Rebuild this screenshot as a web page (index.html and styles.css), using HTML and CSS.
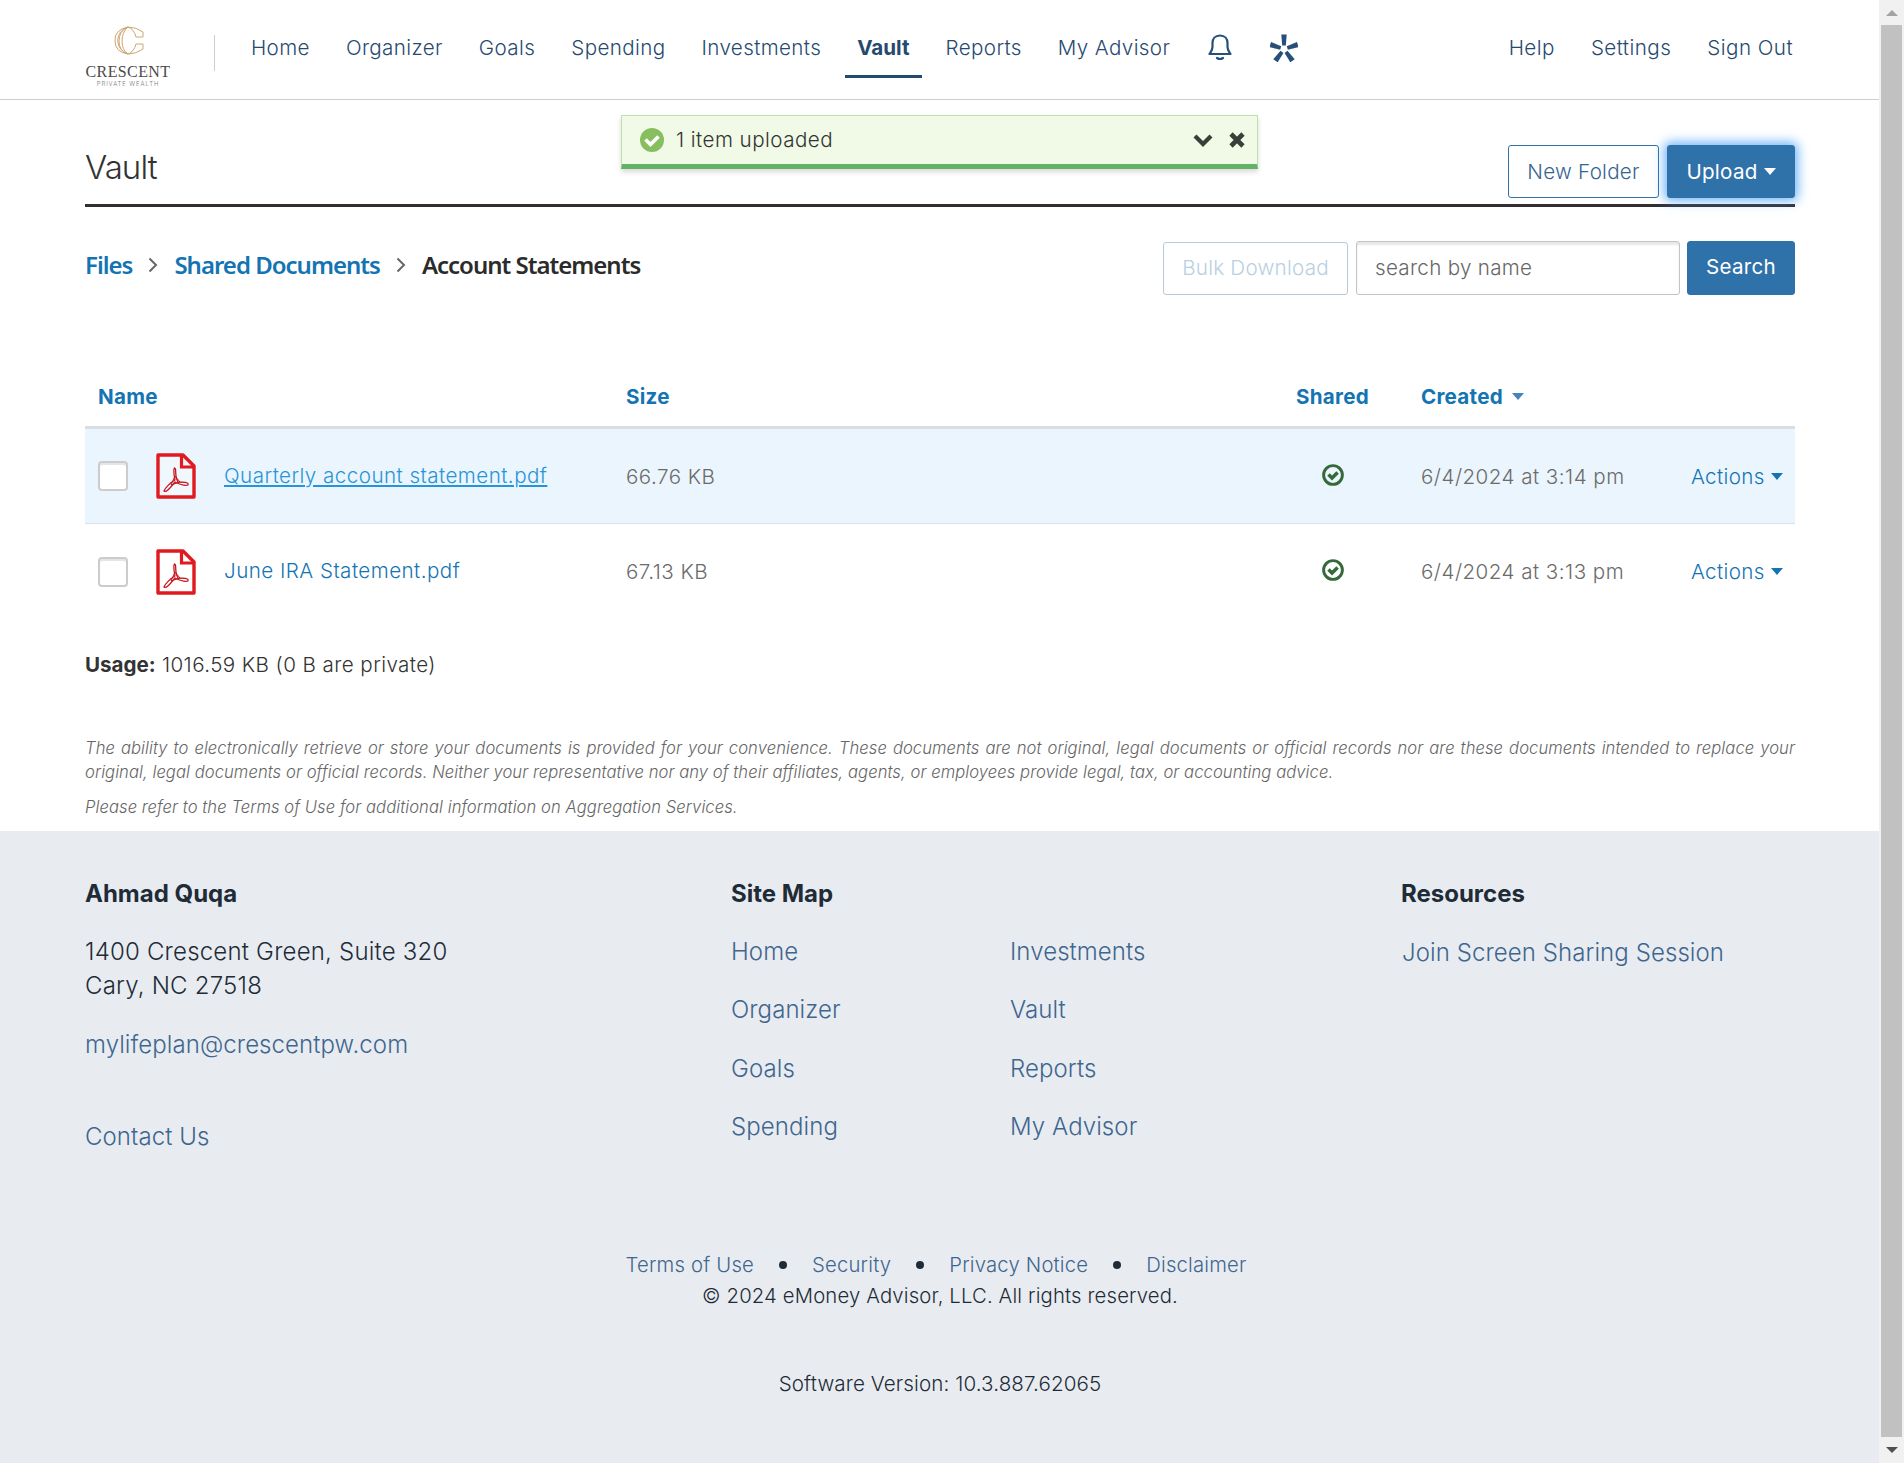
FILE: index.html
```html
<!DOCTYPE html>
<html lang="en">
<head>
    <meta charset="UTF-8">
    <meta name="viewport" content="width=device-width, initial-scale=1.0">
    <title>Vault - Crescent Private Wealth</title>
    <link rel="stylesheet" href="styles.css">
</head>
<body>

    <svg class="sprite" width="0" height="0">
        <symbol id="icon-pdf" viewBox="0 0 40 46">
            <path d="M2 2H27L38 13V44H2Z" fill="#fff" fill-opacity="0.3" stroke="#e01a1f" stroke-width="3.400" stroke-linejoin="round"/>
            <path d="M25.500 2V14H38" fill="none" stroke="#e01a1f" stroke-width="3.200"/>
            <path d="M18.500 15C17 17 18 22 19 27C15 29 9 35 8 38C10 40 14 35 19 29C23 31 29 33 32 32C33 29 27 29 22 29C19 24 20 19 19.500 16Z" fill="none" stroke="#c4161c" stroke-width="1.300" stroke-linejoin="round"/>
            <path d="M19 23L15 32L24 29Z" fill="none" stroke="#c4161c" stroke-width="1"/>
        </symbol>
        <symbol id="icon-shared" viewBox="0 0 22 22">
            <circle cx="11" cy="11" r="9.400" fill="none" stroke="#35693a" stroke-width="2.900"/>
            <path d="M6.500 10.600L10 14L15.600 8.400" fill="none" stroke="#35693a" stroke-width="3.500"/>
        </symbol>
    </svg>

    <div class="page">
        <header class="header">
            <a class="logo" href="#">
                <svg width="34" height="30" viewBox="0 0 34 30" fill="none" stroke="#cfa672" stroke-width="1">
                    <path d="M32 11V6Q25 1 17 1A14 14 0 0 0 17 28Q25 28 32 23V18H25Q23 26 17 28M32 11H25Q23 3 17 1"/>
                    <path d="M17 1Q3 4 4 15Q4 26 17 28M17 1Q8 5 8 15Q8 25 17 28M17 1Q11 6 11 15Q11 24 17 28"/>
                </svg>
                <span class="logo-name">CRESCENT</span>
                <span class="logo-sub">PRIVATE WEALTH</span>
            </a>
            <nav class="main-nav">
                <a href="#">Home</a>
                <a href="#">Organizer</a>
                <a href="#">Goals</a>
                <a href="#">Spending</a>
                <a href="#">Investments</a>
                <a class="active" href="#">Vault</a>
                <a href="#">Reports</a>
                <a href="#">My Advisor</a>
            </nav>
            <div class="nav-icons">
                <svg width="24" height="27" viewBox="0 0 24 27" fill="none" stroke="#264f7c" stroke-width="2.200" stroke-linejoin="round" stroke-linecap="round">
                    <path d="M12 1.500C7 1.500 4.500 5 4.500 9V13C4.500 16 3 17.500 1.500 20H22.500C21 17.500 19.500 16 19.500 13V9C19.500 5 17 1.500 12 1.500Z"/>
                    <path d="M9 24Q12 26 15 24"/>
                </svg>
                <svg width="28" height="28" viewBox="0 0 28 28" fill="#264f7c">
                    <path id="ray" d="M11.300 0.500H16.700L15.800 11.500H12.200Z"/>
                    <use href="#ray" transform="rotate(72 14 15)"/>
                    <use href="#ray" transform="rotate(144 14 15)"/>
                    <use href="#ray" transform="rotate(216 14 15)"/>
                    <use href="#ray" transform="rotate(288 14 15)"/>
                </svg>
            </div>
            <nav class="user-nav">
                <a href="#">Help</a>
                <a href="#">Settings</a>
                <a href="#">Sign Out</a>
            </nav>
        </header>

        <div class="toast">
            <svg width="24" height="24" viewBox="0 0 24 24">
                <circle cx="12" cy="12" r="12" fill="#86be60"/>
                <path d="M5.500 11.500L10.500 16.500L18.500 8.500" fill="none" stroke="#fff" stroke-width="3.600"/>
            </svg>
            <span class="toast-text">1 item uploaded</span>
            <svg width="20" height="14" viewBox="0 0 20 14"><path d="M2 3L10 11L18 3" fill="none" stroke="#393f39" stroke-width="4.200"/></svg>
            <svg class="toast-close" width="16" height="16" viewBox="0 0 16 16"><path d="M2 2L14 14M14 2L2 14" fill="none" stroke="#393f39" stroke-width="4.600"/></svg>
        </div>

        <main class="content">
            <div class="title-bar">
                <h1>Vault</h1>
                <div class="title-actions">
                    <button class="btn btn-outline">New Folder</button>
                    <button class="btn btn-primary btn-upload">Upload<span class="caret"></span></button>
                </div>
            </div>

            <div class="toolbar">
                <div class="breadcrumb">
                    <a href="#">Files</a>
                    <svg width="10" height="16" viewBox="0 0 10 16"><path d="M1.500 1.500L8 8L1.500 14.500" fill="none" stroke="#666" stroke-width="2"/></svg>
                    <a href="#">Shared Documents</a>
                    <svg width="10" height="16" viewBox="0 0 10 16"><path d="M1.500 1.500L8 8L1.500 14.500" fill="none" stroke="#666" stroke-width="2"/></svg>
                    <span class="current">Account Statements</span>
                </div>
                <div class="search">
                    <button class="btn btn-outline btn-bulk" disabled>Bulk Download</button>
                    <input type="text" placeholder="search by name">
                    <button class="btn btn-primary btn-search">Search</button>
                </div>
            </div>

            <div class="files">
                <div class="file-row file-head">
                    <span>Name</span>
                    <span>Size</span>
                    <span class="col-shared">Shared</span>
                    <span>Created<i class="caret caret-sort"></i></span>
                    <span></span>
                </div>
                <div class="file-row selected">
                    <div class="file-name">
                        <input type="checkbox">
                        <svg width="40" height="46"><use href="#icon-pdf"/></svg>
                        <a href="#">Quarterly account statement.pdf</a>
                    </div>
                    <span>66.76 KB</span>
                    <span class="col-shared"><svg width="22" height="22"><use href="#icon-shared"/></svg></span>
                    <span>6/4/2024 at 3:14 pm</span>
                    <a class="actions" href="#">Actions<i class="caret"></i></a>
                </div>
                <div class="file-row">
                    <div class="file-name">
                        <input type="checkbox">
                        <svg width="40" height="46"><use href="#icon-pdf"/></svg>
                        <a href="#">June IRA Statement.pdf</a>
                    </div>
                    <span>67.13 KB</span>
                    <span class="col-shared"><svg width="22" height="22"><use href="#icon-shared"/></svg></span>
                    <span>6/4/2024 at 3:13 pm</span>
                    <a class="actions" href="#">Actions<i class="caret"></i></a>
                </div>
            </div>

            <p class="usage"><b>Usage:</b> 1016.59 KB (0 B are private)</p>

            <div class="disclaimer">
                <p>The ability to electronically retrieve or store your documents is provided for your convenience. These documents are not original, legal documents or official records nor are these documents intended to replace your original, legal documents or official records. Neither your representative nor any of their affiliates, agents, or employees provide legal, tax, or accounting advice.</p>
                <p>Please refer to the Terms of Use for additional information on Aggregation Services.</p>
            </div>
        </main>

        <footer class="footer">
            <div class="footer-cols">
                <div>
                    <h2>Ahmad Quqa</h2>
                    <p class="address">1400 Crescent Green, Suite 320<br>Cary, NC 27518</p>
                    <a class="email" href="#">mylifeplan@crescentpw.com</a>
                    <a href="#">Contact Us</a>
                </div>
                <div>
                    <h2>Site Map</h2>
                    <div class="site-map">
                        <a href="#">Home</a>
                        <a href="#">Investments</a>
                        <a href="#">Organizer</a>
                        <a href="#">Vault</a>
                        <a href="#">Goals</a>
                        <a href="#">Reports</a>
                        <a href="#">Spending</a>
                        <a href="#">My Advisor</a>
                    </div>
                </div>
                <div>
                    <h2>Resources</h2>
                    <a class="join" href="#">Join Screen Sharing Session</a>
                </div>
            </div>
            <div class="legal">
                <a href="#">Terms of Use</a>
                <i></i>
                <a href="#">Security</a>
                <i></i>
                <a href="#">Privacy Notice</a>
                <i></i>
                <a href="#">Disclaimer</a>
            </div>
            <p class="copyright">© 2024 eMoney Advisor, LLC. All rights reserved.</p>
            <p class="version">Software Version: 10.3.887.62065</p>
        </footer>
    </div>

    <div class="scrollbar">
        <span class="arrow-up"></span>
        <div class="thumb"></div>
        <span class="arrow-down"></span>
    </div>

</body>
</html>
```
FILE: styles.css
```css
* {
    box-sizing: border-box;
}
body {
    display: flex;
    height: 1463px;
    margin: 0;
    overflow: hidden;
    background-color: #fff;
    color: #333;
    font-family: Inter, "Liberation Sans", sans-serif;
    font-size: 20.6px;
    font-weight: 350;
    letter-spacing: 0.46px;
}
a {
    color: #1474b3;
    text-decoration: none;
}
h1, h2, p {
    margin: 0;
}
svg {
    display: block;
    flex: none;
}
.sprite {
    position: absolute;
}
.page {
    position: relative;
    display: flex;
    flex-direction: column;
    width: 1879px;
    height: 1463px;
}

/* Header */
.header {
    display: flex;
    flex: none;
    height: 100px;
    padding: 0 86px 0 85px;
    border-bottom: 1px solid #c9cfd2;
}
.header a {
    color: #264a6f;
}
.header .logo {
    display: flex;
    flex-direction: column;
    align-items: center;
    width: 86px;
    margin-top: 26px;
    color: #4b4b4b;
    white-space: nowrap;
}
.logo-name {
    margin-top: 8px;
    font: 400 16px/16px "Liberation Serif", serif;
    letter-spacing: 0.4px;
}
.logo-sub {
    margin-top: 0;
    color: #777;
    font-size: 6px;
    line-height: 7px;
    letter-spacing: 0.9px;
}
.main-nav {
    display: flex;
    align-items: flex-start;
    gap: 36px;
    margin-left: 43px;
    padding-left: 36px;
    height: 36px;
    margin-top: 35px;
    border-left: 1px solid #c9cfd2;
    line-height: 26px;
    letter-spacing: 0.38px;
}
.main-nav .active {
    height: 43px;
    margin: 0 -12px;
    padding: 0 12px;
    border-bottom: 3px solid #264a6f;
    font-weight: 700;
    letter-spacing: 0;
}
.nav-icons {
    display: flex;
    gap: 38px;
    margin: 34px 0 0 38px;
}
.user-nav {
    display: flex;
    gap: 36px;
    margin: 35px 0 0 auto;
    line-height: 26px;
}

/* Upload message */
.toast {
    position: absolute;
    top: 115px;
    left: 621px;
    display: flex;
    align-items: center;
    width: 637px;
    height: 54px;
    padding: 0 12px 0 18px;
    border: 1px solid #bfe0a8;
    border-bottom: 5px solid #62b268;
    background-color: #f0fae6;
    box-shadow: 0 3px 5px rgba(0, 0, 0, 0.15);
}
.toast-text {
    margin: 0 auto 2px 12px;
}
.toast-close {
    margin-left: 16px;
}

/* Title and buttons */
.content {
    height: 731px;
    padding: 0 84px 0 85px;
}
.title-bar {
    display: flex;
    justify-content: space-between;
    height: 107px;
    border-bottom: 3px solid #332f31;
}
h1 {
    margin-top: 47px;
    font-size: 33px;
    font-weight: 350;
    line-height: 40px;
    letter-spacing: -0.9px;
}
.title-actions {
    display: flex;
    gap: 8px;
    margin-top: 45px;
}
.btn {
    height: 53px;
    padding: 0;
    border: 1px solid #2f71a9;
    border-radius: 3px;
    font: inherit;
    letter-spacing: 0.25px;
}
.btn-outline {
    width: 151px;
    background-color: #fff;
    color: #356590;
}
.btn-primary {
    background-color: #2f71a9;
    color: #fff;
    font-weight: 400;
}
.btn-upload {
    width: 128px;
    box-shadow: 0 0 11px 3px rgba(66, 158, 245, 0.75);
}
.caret {
    display: inline-block;
    margin-left: 6px;
    border: 6.5px solid transparent;
    border-top: 7px solid currentColor;
    border-bottom: 0;
    vertical-align: 4px;
}
.toolbar {
    display: flex;
    justify-content: space-between;
    margin-top: 34px;
}
.breadcrumb {
    display: flex;
    align-items: center;
    height: 47px;
    gap: 16px;
    font-family: "Noto Sans", sans-serif;
    font-size: 24px;
    font-weight: 600;
    letter-spacing: -1px;
}
.current {
    color: #2b2b2b;
}
.search {
    display: flex;
    align-items: center;
}
.btn-bulk {
    width: 185px;
    margin-right: 8px;
    padding-bottom: 2px;
    border-color: #b9c9d8;
    color: #b9cfe2;
}
.search input {
    width: 324px;
    height: 54px;
    margin-right: 7px;
    padding: 0 18px 1px;
    border: 1px solid #c4c4c4;
    border-radius: 3px;
    box-shadow: inset 0 3px 2px #e8e8e8;
    font: inherit;
    letter-spacing: 0.3px;
}
.search input::placeholder {
    color: #666;
}
.btn-search {
    width: 108px;
    height: 54px;
    padding-bottom: 3px;
}

/* File list */
.files {
    margin-top: 71px;
    color: #6b6b6b;
}
.file-row {
    display: grid;
    grid-template-columns: 528px 621px 174px 270px 92px;
    align-items: center;
    height: 95px;
    padding-left: 13px;
}
.file-head {
    height: 63px;
    border-bottom: 3px solid #d7dfe5;
    color: #1474b3;
    font-weight: 650;
    letter-spacing: 0.25px;
}
.col-shared {
    display: flex;
    justify-content: center;
    width: 171px;
}
.col-shared svg {
    margin-bottom: 3px;
}
.selected {
    border-bottom: 1px solid #d7e2ea;
    background-color: #ebf5fd;
}
.selected .file-name a {
    color: #2694d8;
    text-decoration: underline;
}
.caret-sort {
    margin-left: 9px;
    color: #4585ba;
}
.file-name {
    display: flex;
    align-items: center;
}
.file-name input {
    width: 30px;
    height: 30px;
    margin: 0 28px 0 0;
    appearance: none;
    border: 2px solid #ccc;
    border-radius: 4px;
    background-color: #fff;
    box-shadow: inset 0 2px 1px #e4e4e4;
}
.file-name a {
    margin: 0 0 2px 28px;
}
.actions {
    letter-spacing: 0.35px;
    white-space: nowrap;
}
.usage {
    margin-top: 33px;
    line-height: 26px;
    letter-spacing: 0.42px;
}
.usage b {
    font-weight: 650;
    letter-spacing: 0;
}
.disclaimer {
    margin-top: 58px;
    color: #666;
    font-size: 16.6px;
    font-style: italic;
    line-height: 24px;
    letter-spacing: 0.07px;
    text-align: justify;
}
.disclaimer p {
    margin-bottom: 11px;
}

/* Footer */
.footer {
    flex: 1;
    padding: 46px 84px 0 85px;
    background-color: #e8ecf1;
    color: #1f2c38;
    line-height: 34px;
    letter-spacing: 0.08px;
}
.footer a {
    color: #3f668f;
}
.footer-cols {
    display: grid;
    grid-template-columns: 646px 670px 1fr;
    height: 372px;
    font-size: 24px;
}
.footer-cols > div > a {
    display: block;
}
h2 {
    margin-bottom: 24px;
    font-size: 24px;
    font-weight: 650;
    line-height: 34px;
    letter-spacing: 0;
}
.address {
    margin-bottom: 25px;
    letter-spacing: 0.2px;
}
.footer .email {
    margin-bottom: 58px;
}
.site-map {
    display: grid;
    grid-template-columns: 279px 1fr;
    row-gap: 24.4px;
}
.join {
    padding: 1px 0 0 1px;
}
.legal {
    display: flex;
    align-items: center;
    justify-content: center;
    width: 1702px;
    font-size: 20.3px;
    line-height: 32px;
    letter-spacing: 0.18px;
}
.legal i {
    width: 8px;
    height: 8px;
    margin: 0 25px;
    border-radius: 50%;
    background-color: #1f2c38;
}
.copyright {
    font-size: 20.3px;
    line-height: 30px;
    letter-spacing: 0.15px;
    text-align: center;
}
.version {
    margin-top: 58px;
    line-height: 30px;
    letter-spacing: 0.1px;
    text-align: center;
}

/* Window scrollbar */
.scrollbar {
    display: flex;
    flex-direction: column;
    align-items: center;
    width: 25px;
    background-color: #f1f1f1;
}
.thumb {
    flex: 1;
    width: 21px;
    margin: 9px 0 10px;
    background-color: #c1c1c1;
}
.arrow-up {
    margin-top: 10px;
    border: 6px solid transparent;
    border-top: 0;
    border-bottom-color: #a3a3a3;
}
.arrow-down {
    margin-bottom: 10px;
    border: 6px solid transparent;
    border-bottom: 0;
    border-top-color: #505050;
}
```
